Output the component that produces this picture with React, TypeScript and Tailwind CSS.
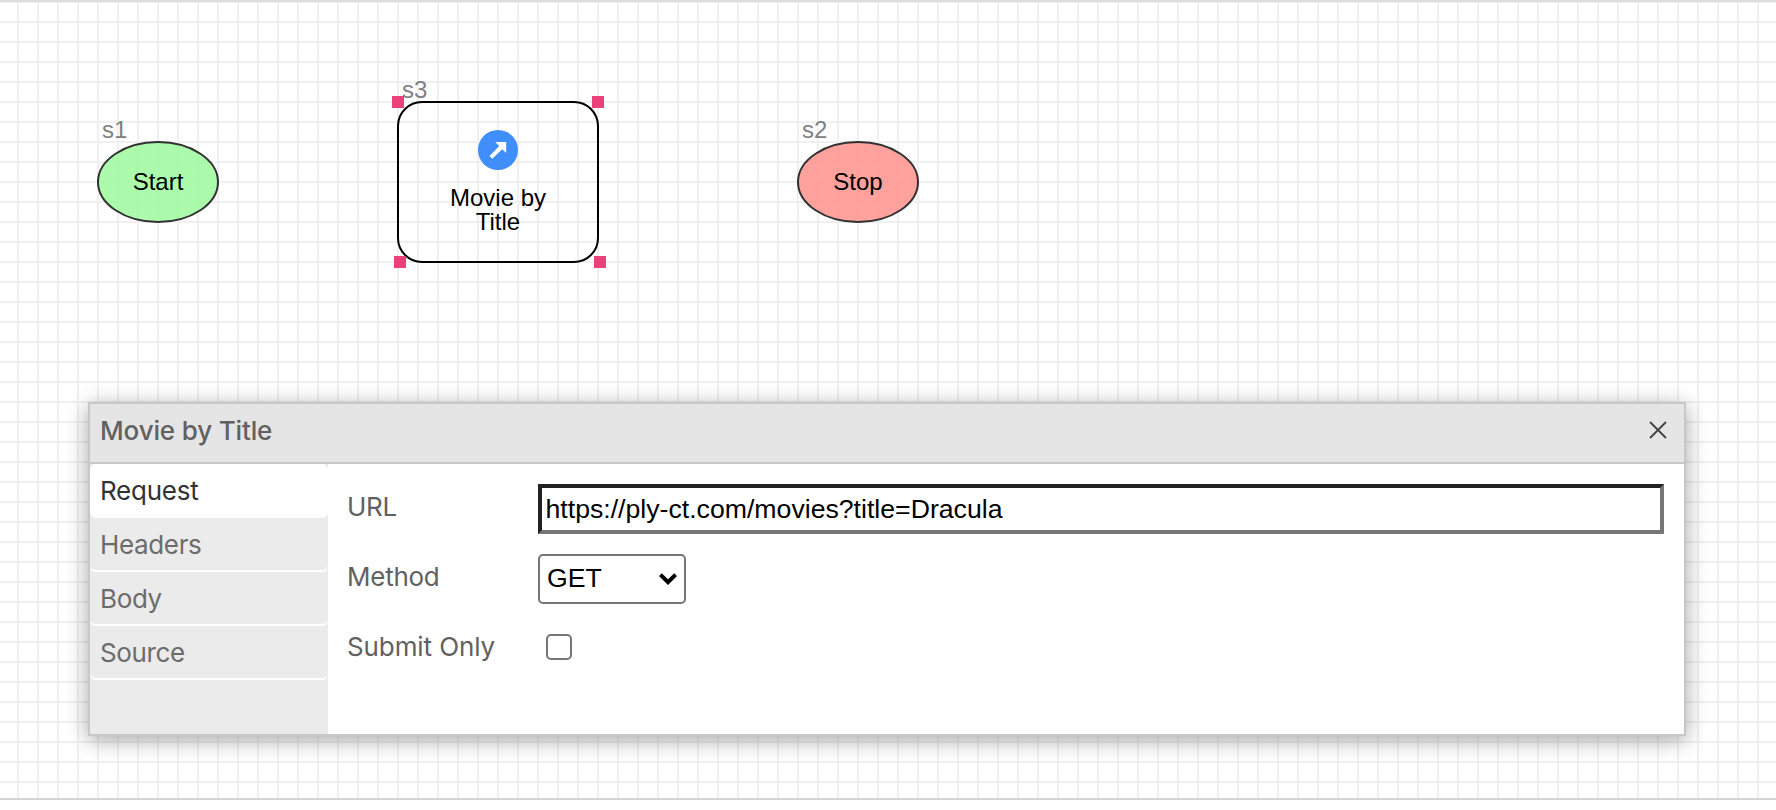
import { useState } from "react";

const tabs = ["Request", "Headers", "Body", "Source"];

function Handle({ x, y }: { x: number; y: number }) {
  return <rect x={x} y={y} width="12" height="12" fill="#ec407a" />;
}

function Diagram() {
  return (
    <svg width="1776" height="796" viewBox="0 2 1776 796" fontFamily="'Liberation Sans', Arial, sans-serif" fontSize="24">
      <defs>
        <pattern id="grid" x="17" y="21" width="20" height="20" patternUnits="userSpaceOnUse">
          <path d="M0 1H20M1 0V20" stroke="#f0f0f0" strokeWidth="2" />
        </pattern>
      </defs>
      <rect y="2" width="1776" height="796" fill="url(#grid)" />

      <text x="102" y="138" fill="#808080">s1</text>
      <ellipse cx="158" cy="182" rx="60" ry="40" fill="#98fb98" stroke="#000" strokeWidth="2" opacity="0.8" />
      <text x="158" y="190" textAnchor="middle">Start</text>

      <rect x="398" y="102" width="200" height="160" rx="24" fill="none" stroke="#000" strokeWidth="2" />
      <text x="402" y="98" fill="#808080">s3</text>
      <circle cx="498" cy="150" r="20" fill="#3f8efc" />
      <path d="M495.3 142H506.2V153L502.2 149.2L492.2 158.7L489.5 156L499.2 146Z" fill="#fff" />
      <text x="498" y="206" textAnchor="middle">Movie by</text>
      <text x="498" y="230" textAnchor="middle">Title</text>
      <Handle x={392} y={96} />
      <Handle x={592} y={96} />
      <Handle x={394} y={256} />
      <Handle x={594} y={256} />

      <text x="802" y="138" fill="#808080">s2</text>
      <ellipse cx="858" cy="182" rx="60" ry="40" fill="#ff8c86" stroke="#000" strokeWidth="2" opacity="0.8" />
      <text x="858" y="190" textAnchor="middle">Stop</text>
    </svg>
  );
}

function ConfigPanel() {
  const [active, setActive] = useState("Request");
  return (
    <section className="absolute top-[402px] left-[88px] flex h-[334px] w-[1598px] flex-col border-2 border-[#c8c8c8] bg-white font-['Inter',sans-serif] text-[26px] tracking-[-0.25px] text-[#616161] shadow-[0_4px_20px_rgba(0,0,0,0.35)]">
      <header className="flex h-[60px] shrink-0 items-center justify-between border-b-2 border-[#c8c8c8] bg-[#e5e5e5] pr-[17px] pb-[6px] pl-[10px]">
        <h1 className="font-medium tracking-[-0.15px]">Movie by Title</h1>
        <button aria-label="Close">
          <svg width="18" height="18" viewBox="0 0 18 18" stroke="#424242" strokeWidth="1.8">
            <path d="M1 1L17 17M17 1L1 17" />
          </svg>
        </button>
      </header>
      <div className="flex grow">
        <nav className="flex w-[238px] flex-col bg-[#ebebeb]">
          {tabs.map((tab) => (
            <button
              key={tab}
              onClick={() => setActive(tab)}
              className={
                tab === active
                  ? "h-[54px] rounded-[6px] border-b-2 border-white bg-white pl-[10px] text-left text-[#333333]"
                  : "h-[54px] rounded-[6px] border-b-2 border-white pl-[10px] text-left tracking-[-0.35px] text-[#6c6c6c]"
              }
            >
              {tab}
            </button>
          ))}
        </nav>
        <div className="flex grow flex-col gap-5 pt-5 pr-5 pl-[19px]">
          <label className="flex h-[50px]">
            <span className="w-[191px] pt-[3px]">URL</span>
            <input
              className="h-[50px] grow border-4 border-t-[#212121] border-r-[#767676] border-b-[#767676] border-l-[#212121] px-[3.5px] font-['Liberation_Sans',Arial,sans-serif] text-[26.66px] tracking-normal text-black"
              defaultValue="https://ply-ct.com/movies?title=Dracula"
            />
          </label>
          <label className="flex h-[50px]">
            <span className="w-[191px] pt-[3px]">Method</span>
            <span className="flex h-[50px] w-[148px] items-center justify-between rounded-[5px] border-2 border-[#767676] pr-[7px] pl-[7px] font-['Liberation_Sans',Arial,sans-serif] text-[26.66px] tracking-normal text-black">
              GET
              <svg width="18" height="12" viewBox="0 0 18 12" fill="none" stroke="#000" strokeWidth="4">
                <path d="M1.4 1.6L9 9.2L16.6 1.6" />
              </svg>
            </span>
          </label>
          <label className="flex h-[50px]">
            <span className="w-[199px] pt-[3px] tracking-[-0.1px]">Submit Only</span>
            <input type="checkbox" className="mt-[10px] size-[26px] appearance-none rounded-[5px] border-2 border-[#767676] bg-white" />
          </label>
        </div>
      </div>
    </section>
  );
}

export default function App() {
  return (
    <main className="relative h-[810px] w-[1776px] overflow-hidden bg-white">
      <div className="h-[800px] border-y-2 border-t-[#dddddd] border-b-[#d4d4d4]">
        <Diagram />
      </div>
      <ConfigPanel />
    </main>
  );
}
